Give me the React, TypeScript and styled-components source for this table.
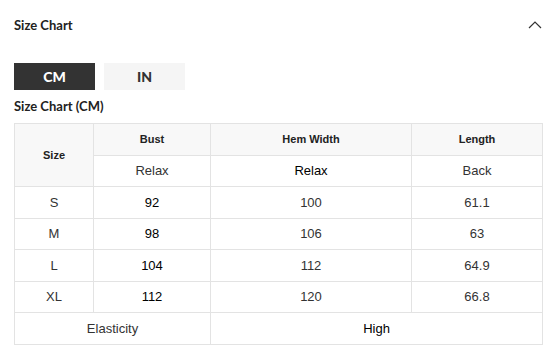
import React from "react";
import styled, { createGlobalStyle } from "styled-components";

const Global = createGlobalStyle`
  html, body { margin: 0; padding: 0; background: #fff; }
  body { font-family: "Lato", "Noto Sans", sans-serif; }
`;

const Page = styled.div`
  width: 555px;
  padding: 0 13px 0 14px;
  box-sizing: border-box;
`;

const Header = styled.div`
  height: 50px;
  display: flex;
  align-items: center;
  justify-content: space-between;
`;

const Title = styled.div`
  font-family: "Lato", sans-serif;
  font-weight: 700;
  font-size: 13px;
  color: #222;
`;

const Chevron = styled.svg`
  width: 14px;
  height: 8px;
  margin-right: 0px;
  margin-top: -1px;
`;

const Tabs = styled.div`
  display: flex;
  gap: 9px;
  margin-top: 13px;
`;

const Tab = styled.div<{ $active?: boolean }>`
  width: 81px;
  height: 27px;
  display: flex;
  align-items: center;
  justify-content: center;
  font-family: "Lato", sans-serif;
  font-weight: 900;
  font-size: 14px;
  background: ${(p) => (p.$active ? "#333333" : "#f5f5f5")};
  color: ${(p) => (p.$active ? "#ffffff" : "#333333")};
`;

const SubTitle = styled.div`
  font-family: "Lato", sans-serif;
  font-weight: 700;
  font-size: 13px;
  color: #222;
  margin-top: 8px;
  height: 17px;
  line-height: 17px;
`;

const Table = styled.table`
  margin-top: 8px;
  border-collapse: collapse;
  table-layout: fixed;
  width: 528px;
  font-family: "Liberation Sans", Arial, sans-serif;
`;

const Cell = styled.td<{ $head?: boolean; $dark?: boolean }>`
  border: 1px solid #e3e3e3;
  height: 30.5px;
  padding: 0;
  text-align: center;
  vertical-align: middle;
  background: ${(p) => (p.$head ? "#f8f8f8" : "#fff")};
  font-size: ${(p) => (p.$head ? "11px" : "13px")};
  font-weight: ${(p) => (p.$head ? 700 : 400)};
  color: ${(p) => (p.$head ? "#222" : p.$dark ? "#000" : "#333")};
`;

const rows = [
  ["S", "92", "100", "61.1"],
  ["M", "98", "106", "63"],
  ["L", "104", "112", "64.9"],
  ["XL", "112", "120", "66.8"],
];

export default function App() {
  return (
    <Page>
      <Global />
      <Header>
        <Title>Size Chart</Title>
        <Chevron viewBox="0 0 14 8">
          <polyline points="1,7 7,1 13,7" fill="none" stroke="#333" strokeWidth="1.2" />
        </Chevron>
      </Header>
      <Tabs>
        <Tab $active>CM</Tab>
        <Tab>IN</Tab>
      </Tabs>
      <SubTitle>Size Chart (CM)</SubTitle>
      <Table>
        <colgroup>
          <col style={{ width: 79 }} />
          <col style={{ width: 117 }} />
          <col style={{ width: 201 }} />
          <col style={{ width: 131 }} />
        </colgroup>
        <tbody>
          <tr>
            <Cell as="th" $head rowSpan={2}>Size</Cell>
            <Cell as="th" $head>Bust</Cell>
            <Cell as="th" $head>Hem Width</Cell>
            <Cell as="th" $head>Length</Cell>
          </tr>
          <tr>
            <Cell>Relax</Cell>
            <Cell $dark>Relax</Cell>
            <Cell>Back</Cell>
          </tr>
          {rows.map((r) => (
            <tr key={r[0]}>
              <Cell>{r[0]}</Cell>
              <Cell $dark>{r[1]}</Cell>
              <Cell>{r[2]}</Cell>
              <Cell>{r[3]}</Cell>
            </tr>
          ))}
          <tr>
            <Cell colSpan={2}>Elasticity</Cell>
            <Cell colSpan={2} $dark>High</Cell>
          </tr>
        </tbody>
      </Table>
    </Page>
  );
}
